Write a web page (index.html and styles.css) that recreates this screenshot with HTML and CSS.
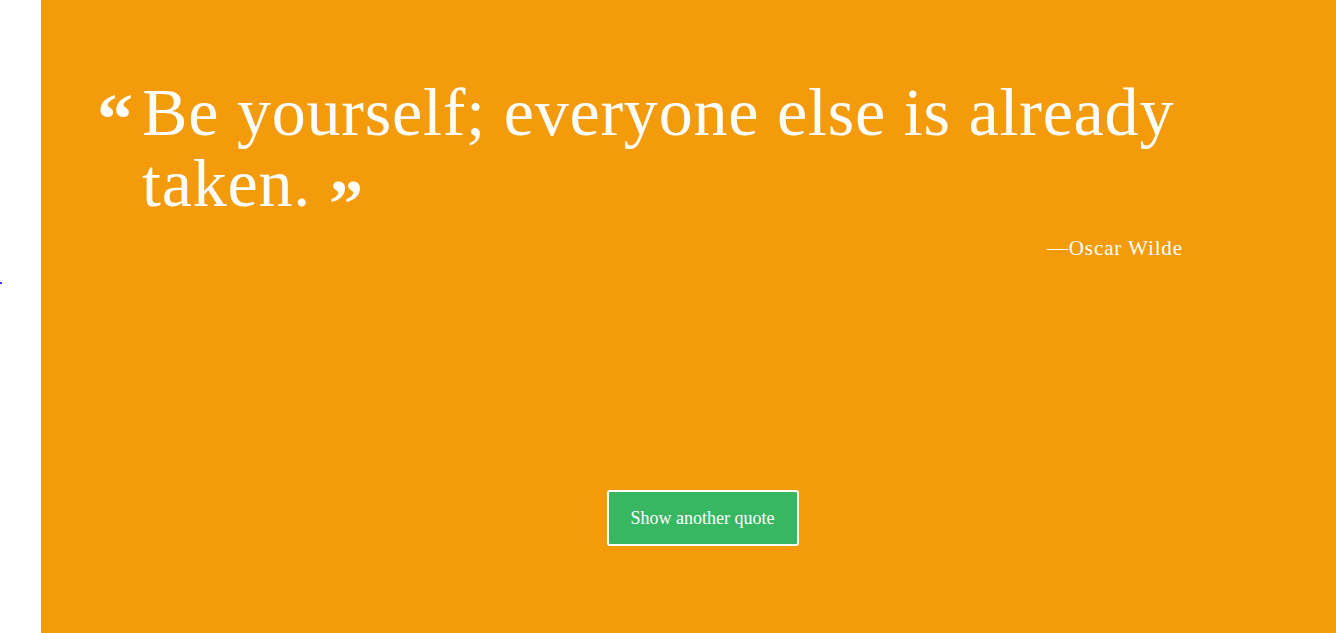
FILE: index.html
```html
<!DOCTYPE html>
<html>
<head>
<meta charset="utf-8">
<link rel="stylesheet" href="styles.css">
</head>
<body>
<div class="gutter"><span class="dot"></span></div>
<main class="panel">
  <div class="quote-box">
    <div class="quote-row">
      <span class="open-mark">&ldquo;</span>
      <p class="quote-text">Be yourself; everyone else is already taken.<span class="close-mark">&rdquo;</span></p>
    </div>
    <p class="author">&mdash;Oscar Wilde</p>
  </div>
  <div class="actions">
    <button class="btn">Show another quote</button>
  </div>
</main>
</body>
</html>
```
FILE: styles.css
```css
html, body {
  margin: 0;
  height: 100%;
}
body {
  display: flex;
  background: #fff;
  font-family: "Liberation Serif", "DejaVu Serif", serif;
}
.gutter {
  width: 41px;
  flex: none;
  display: flex;
  align-items: flex-start;
  padding-top: 282px;
  box-sizing: border-box;
}
.dot {
  width: 2px;
  height: 2px;
  background: #3a3aff;
}
.panel {
  flex: 1;
  background: #f39b0a;
  color: #fff;
  display: flex;
  flex-direction: column;
  padding: 77px 0 0 56px;
  box-sizing: border-box;
}
.quote-box {
  width: 1090px;
}
.quote-row {
  display: flex;
  align-items: flex-start;
}
.open-mark {
  flex: none;
  width: 45px;
  font-size: 72px;
  font-weight: bold;
  line-height: 1;
  margin-top: 6px;
}
.quote-text {
  margin: 0;
  font-size: 68px;
  line-height: 71px;
  letter-spacing: 0.8px;
}
.close-mark {
  font-size: 68px;
  font-weight: bold;
  line-height: 0;
  margin-left: 18px;
  vertical-align: -20px;
  letter-spacing: -2px;
}
.author {
  margin: 17px 0 0;
  text-align: right;
  padding-right: 4px;
  font-size: 21px;
  letter-spacing: 0.9px;
}
.actions {
  display: flex;
  justify-content: center;
  margin-top: 229px;
  padding-right: 28px;
}
.btn {
  font-family: inherit;
  font-size: 18px;
  color: #fff;
  background: #37b762;
  border: 2px solid #fff;
  border-radius: 3px;
  width: 192px;
  height: 56px;
  cursor: pointer;
}
```
